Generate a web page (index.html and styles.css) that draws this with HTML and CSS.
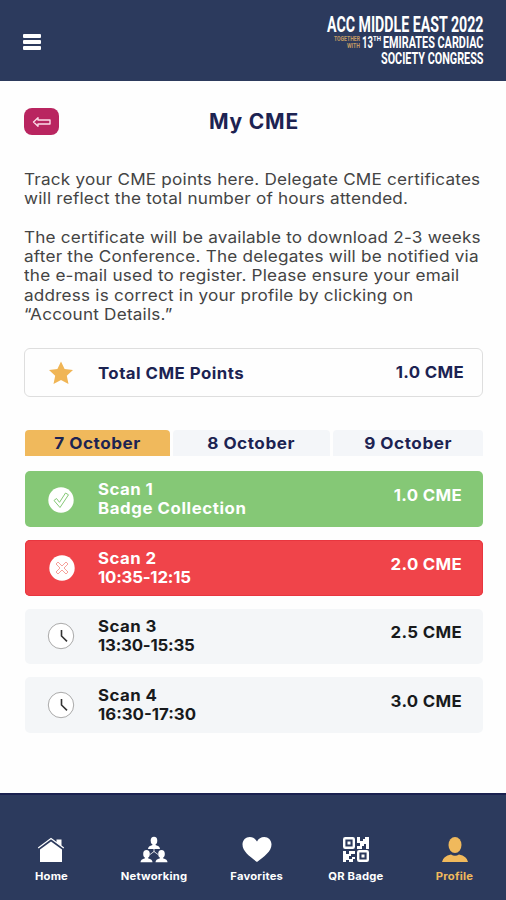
FILE: index.html
```html
<!DOCTYPE html>
<html lang="en">
<head>
<meta charset="utf-8">
<meta name="viewport" content="width=device-width, initial-scale=1">
<title>My CME</title>
<link rel="stylesheet" href="styles.css">
</head>
<body>
<div class="app">
  <header class="topbar">
    <button class="menu" aria-label="Menu"><span></span><span></span><span></span></button>
    <svg class="logo" width="160" height="58" viewBox="0 0 160 58">
      <g transform="scale(.665 1)">
        <text x="1.500" y="21" font-size="21.500" textLength="235.300" lengthAdjust="spacingAndGlyphs">ACC MIDDLE EAST 2022</text>
        <g class="logo-accent">
          <text x="12" y="30" font-size="7.500" textLength="39.100" lengthAdjust="spacingAndGlyphs">TOGETHER</text>
          <text x="31.600" y="37" font-size="7.500" textLength="19.500" lengthAdjust="spacingAndGlyphs">WITH</text>
        </g>
        <text x="54.100" y="37" font-size="17" textLength="16.500" lengthAdjust="spacingAndGlyphs">13</text>
        <text x="70.700" y="30" font-size="7" textLength="12" lengthAdjust="spacingAndGlyphs">TH</text>
        <text x="85.700" y="37" font-size="17" textLength="151.100" lengthAdjust="spacingAndGlyphs">EMIRATES CARDIAC</text>
        <text x="82.700" y="53" font-size="17" textLength="154.100" lengthAdjust="spacingAndGlyphs">SOCIETY CONGRESS</text>
      </g>
    </svg>
  </header>

  <main class="content">
    <div class="heading">
      <button class="back" aria-label="Back">
        <svg width="20" height="12" viewBox="0 0 20 12"><path d="M1.500 6 6 1.800V4H18V8H6V10.200Z"/></svg>
      </button>
      <h1>My CME</h1>
    </div>

    <p class="copy">Track your CME points here. Delegate CME certificates<br>will reflect the total number of hours attended.</p>
    <p class="copy">The certificate will be available to download 2-3 weeks<br>after the Conference. The delegates will be notified via<br>the e-mail used to register. Please ensure your email<br>address is correct in your profile by clicking on<br>“Account Details.”</p>

    <section class="total">
      <svg class="star" width="26" height="24" viewBox="0 0 26 24"><path d="M13 .5 16.600 8 25 9 18.800 14.800 20.500 23 13 19 5.500 23 7.200 14.800 1 9 9.400 8Z"/></svg>
      <span class="label">Total CME Points</span>
      <span class="points">1.0 CME</span>
    </section>

    <nav class="tabs">
      <a class="tab active"><span>7 October</span></a>
      <a class="tab"><span>8 October</span></a>
      <a class="tab"><span>9 October</span></a>
    </nav>

    <section class="scans">
      <article class="scan done">
        <svg class="status" width="28" height="28" viewBox="0 0 28 28"><circle class="disc" cx="14" cy="14" r="12.700"/><path class="mark" d="M7 14.500 9.500 12.500 12.500 16.300 18.500 7 21.500 8.800 13 21.500Z"/></svg>
        <div class="label">Scan 1<br><span class="wider">Badge Collection</span></div>
        <span class="points">1.0 CME</span>
      </article>
      <article class="scan missed">
        <svg class="status" width="28" height="28" viewBox="0 0 28 28"><circle class="disc" cx="15" cy="13" r="12.700"/><path class="mark" d="M9 9 11 7 15 11 19 7 21 9 17 13 21 17 19 19 15 15 11 19 9 17 13 13Z"/></svg>
        <div class="label">Scan 2<br><span class="time">10:35-12:15</span></div>
        <span class="points">2.0 CME</span>
      </article>
      <article class="scan">
        <svg class="status" width="28" height="28" viewBox="0 0 28 28"><circle class="dial" cx="14" cy="13" r="12.700"/><path class="hands" d="M14.500 7V13L20 18.300"/></svg>
        <div class="label">Scan 3<br><span class="time">13:30-15:35</span></div>
        <span class="points">2.5 CME</span>
      </article>
      <article class="scan">
        <svg class="status" width="28" height="28" viewBox="0 0 28 28"><circle class="dial" cx="14" cy="13" r="12.700"/><path class="hands" d="M14.500 7V13L20 18.300"/></svg>
        <div class="label">Scan 4<br><span class="time wide">16:30-17:30</span></div>
        <span class="points">3.0 CME</span>
      </article>
    </section>
  </main>

  <footer class="bottom">
    <a class="item"><svg width="30" height="28" viewBox="0 0 30 28"><path d="M4 13.500 15 5.500 26 13.500V26H4Z"/><path d="M20.500 3.500H25.500V10L20.500 6.500Z"/><path class="line" d="M2.200 12 15 2.400 27.800 12"/></svg><span>Home</span></a>
    <a class="item"><svg width="30" height="28" viewBox="0 0 30 28"><g id="person"><ellipse cx="15" cy="4.700" rx="3.300" ry="4"/><path d="M9 13Q9 10 13.500 9V7H16.500V9Q21 10 21 13Z"/></g><use href="#person" x="-7.500" y="13.200"/><use href="#person" x="7.500" y="13.200"/><path class="thin" d="M15 12V16M11 18.500 15 15.500 19 18.500"/></svg><span>Networking</span></a>
    <a class="item"><svg width="30" height="28" viewBox="0 0 30 28"><path d="M15 26C8 20.500.5 15.500.5 8.500.5 4 3.800 1 7.700 1 11 1 13.500 2.700 15 5.500 16.500 2.700 19 1 22.300 1 26.200 1 29.500 4 29.500 8.500 29.500 15.500 22 20.500 15 26Z"/></svg><span>Favorites</span></a>
    <a class="item"><svg class="qr" width="30" height="28" viewBox="0 0 30 28"><g class="frames"><rect x="3.200" y="2.200" width="9.600" height="9.600" rx="1"/><rect x="17.200" y="15.200" width="9.600" height="9.600" rx="1"/></g><path d="M6.500 5.500h3v3h-3zM20.500 18.500h3v3h-3zM16 1h3v4h3V3h2V1h4v12h-3V8h-2v2h-2v3h-5v-3h3V7h-3zM2 15h3v3h3v-3h6v3h-4v2H8v3h3v-2h3v2h-2v3H8v-2H5v2H2z"/></svg><span>QR Badge</span></a>
    <a class="item current"><svg width="30" height="28" viewBox="0 0 30 28"><ellipse cx="15" cy="9" rx="6.500" ry="8"/><path d="M2 26Q3 20 11 18.500Q15 21 19 18.500Q27 20 28 26Z"/></svg><span>Profile</span></a>
  </footer>
</div>
</body>
</html>
```
FILE: styles.css
```css
* { box-sizing: border-box; }
body { margin: 0; background: #fefefe; font-family: Inter, "Liberation Sans", sans-serif; }
button { border: 0; padding: 0; }
.app { width: 506px; height: 900px; display: flex; flex-direction: column; }

.topbar { height: 81px; background: #2c3a5d; display: flex; justify-content: space-between; padding: 11px 20px 0 23px; }
.menu { background: none; width: 18px; height: 16px; margin-top: 23px; display: flex; flex-direction: column; justify-content: space-between; }
.menu span { display: block; width: 18px; height: 4px; background: #fff; border-radius: 1px; }
.logo { fill: #fff; font-family: Roboto, sans-serif; font-weight: 700; overflow: visible; }
.logo-accent { fill: #c39a64; }

.content { flex: 1; padding: 27px 23px 0 24px; }
.heading { display: grid; grid-template-columns: 35px 1fr 35px; align-items: center; height: 27px; margin-bottom: 35px; }
.back { width: 35px; height: 27px; border-radius: 8px; background: #b92560; display: flex; align-items: center; justify-content: center; }
.back path { fill: none; stroke: #fbdce8; stroke-width: 1.4; stroke-linejoin: round; }
h1 { margin: 0 0 0 1px; text-align: center; font-size: 21px; font-weight: 700; color: #1c2352; letter-spacing: 0.8px; }

.copy { margin: 0 0 19px; font-size: 16px; line-height: 19.35px; color: #444; letter-spacing: 0.2px; white-space: nowrap; transform: scaleX(1.07); transform-origin: left; }

.total { margin-top: 24px; height: 49px; border: 1.500px solid #dedede; border-radius: 6px; display: flex; align-items: center; padding: 0 18px 0 23px; color: #1c2352; }
.star { margin-right: 24px; fill: #f0b555; }
.label { flex: 1; font-size: 16px; font-weight: 700; letter-spacing: 0.45px; line-height: 19.300px; transform: scaleX(1.05); transform-origin: left; }
.wider { letter-spacing: 0.550px; }
.time { letter-spacing: -0.200px; }
.time.wide { letter-spacing: 0; }
.points { font-size: 16px; font-weight: 700; letter-spacing: 0.3px; transform: scaleX(1.05); transform-origin: right; }
.total .label { margin-top: 2px; }
.total .points { margin-top: -2px; }

.tabs { display: grid; grid-template-columns: 145px 1fr 150px; gap: 3px; margin: 33px 0 15px 1px; }
.tab { height: 26px; border-radius: 4px 4px 0 0; background: #f4f6f9; text-align: center; font-size: 16px; font-weight: 700; line-height: 27px; letter-spacing: 0.5px; color: #1c2352; }
.tab span { display: inline-block; transform: scaleX(1.07); }
.tab.active { background: #f0b95c; }

.scans { display: grid; gap: 13px; margin-left: 1px; }
.scan { height: 55.600px; border-radius: 5px; background: #f4f6f8; display: flex; align-items: center; padding: 0 21px 0 22px; color: #181a1c; }
.status { margin: 2px 23px 0 0; overflow: visible; }
.scan .points { margin-top: -8px; }
.done { background: #85c876; color: #fff; }
.missed { background: #f0444a; color: #fff; box-shadow: inset 0 0 0 1px #e8363f; }
.disc { fill: #fff; }
.mark { fill: none; stroke: #85c876; stroke-width: 1; }
.missed .mark { stroke: #f5a29c; }
.dial { fill: #fff; stroke: #aaa; stroke-width: 1; }
.hands { fill: none; stroke: #333; stroke-width: 1.6; }

.bottom { height: 107px; background: #2c3a5d; border-top: 2px solid #1a2150; display: grid; grid-template-columns: 102px 104px 102px 95px 103px; padding-top: 41px; }
.item { display: flex; flex-direction: column; align-items: center; gap: 6px; color: #fff; font-size: 10.500px; font-weight: 700; line-height: 13px; letter-spacing: 0.2px; }
.item span { transform: scaleX(1.07); }
.item svg { fill: currentColor; }
.line { fill: none; stroke: #fff; stroke-width: 1.2; }
.thin { fill: none; stroke: #fff; stroke-width: 0.8; }
.frames { fill: none; stroke: #fff; stroke-width: 2.400; }
.current { color: #f0b95c; }
```
